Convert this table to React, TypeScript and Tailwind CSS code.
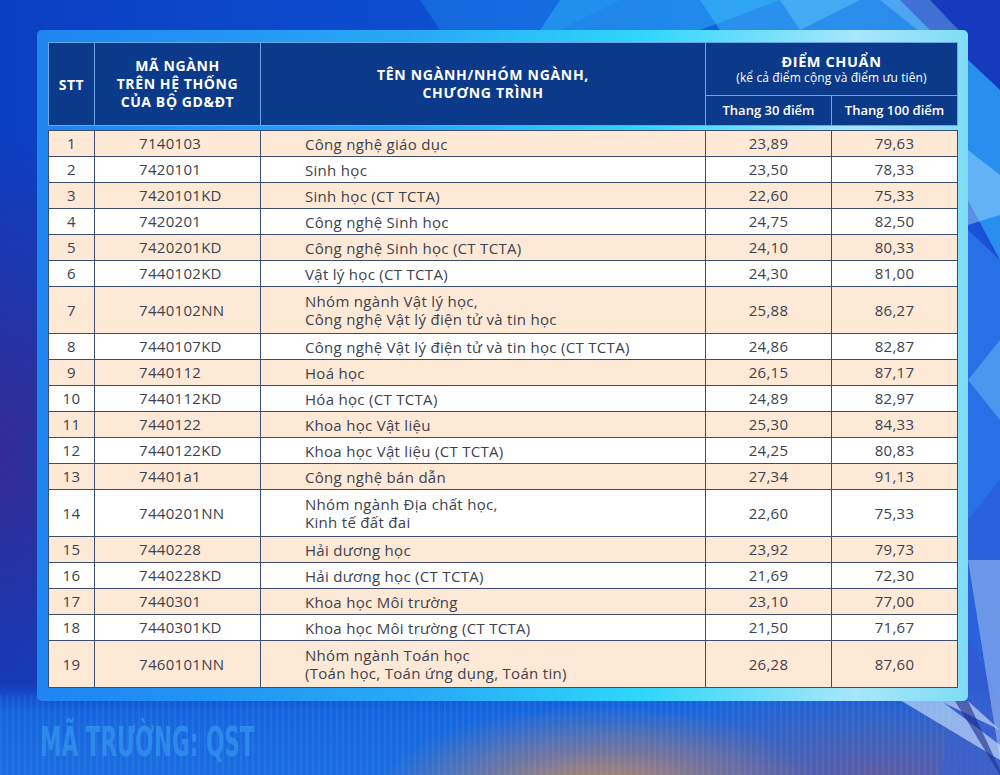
import React from 'react'

type Row = {
  stt: number
  code: string
  name: string[]
  s30: string
  s100: string
}

const rows: Row[] = [
  { stt: 1, code: '7140103', name: ['Công nghệ giáo dục'], s30: '23,89', s100: '79,63' },
  { stt: 2, code: '7420101', name: ['Sinh học'], s30: '23,50', s100: '78,33' },
  { stt: 3, code: '7420101KD', name: ['Sinh học (CT TCTA)'], s30: '22,60', s100: '75,33' },
  { stt: 4, code: '7420201', name: ['Công nghệ Sinh học'], s30: '24,75', s100: '82,50' },
  { stt: 5, code: '7420201KD', name: ['Công nghệ Sinh học (CT TCTA)'], s30: '24,10', s100: '80,33' },
  { stt: 6, code: '7440102KD', name: ['Vật lý học (CT TCTA)'], s30: '24,30', s100: '81,00' },
  { stt: 7, code: '7440102NN', name: ['Nhóm ngành Vật lý học,', 'Công nghệ Vật lý điện tử và tin học'], s30: '25,88', s100: '86,27' },
  { stt: 8, code: '7440107KD', name: ['Công nghệ Vật lý điện tử và tin học (CT TCTA)'], s30: '24,86', s100: '82,87' },
  { stt: 9, code: '7440112', name: ['Hoá học'], s30: '26,15', s100: '87,17' },
  { stt: 10, code: '7440112KD', name: ['Hóa học (CT TCTA)'], s30: '24,89', s100: '82,97' },
  { stt: 11, code: '7440122', name: ['Khoa học Vật liệu'], s30: '25,30', s100: '84,33' },
  { stt: 12, code: '7440122KD', name: ['Khoa học Vật liệu (CT TCTA)'], s30: '24,25', s100: '80,83' },
  { stt: 13, code: '74401a1', name: ['Công nghệ bán dẫn'], s30: '27,34', s100: '91,13' },
  { stt: 14, code: '7440201NN', name: ['Nhóm ngành Địa chất học,', 'Kinh tế đất đai'], s30: '22,60', s100: '75,33' },
  { stt: 15, code: '7440228', name: ['Hải dương học'], s30: '23,92', s100: '79,73' },
  { stt: 16, code: '7440228KD', name: ['Hải dương học (CT TCTA)'], s30: '21,69', s100: '72,30' },
  { stt: 17, code: '7440301', name: ['Khoa học Môi trường'], s30: '23,10', s100: '77,00' },
  { stt: 18, code: '7440301KD', name: ['Khoa học Môi trường (CT TCTA)'], s30: '21,50', s100: '71,67' },
  { stt: 19, code: '7460101NN', name: ['Nhóm ngành Toán học', '(Toán học, Toán ứng dụng, Toán tin)'], s30: '26,28', s100: '87,60' },
]

function Cols() {
  return (
    <colgroup>
      <col className="w-[46px]" />
      <col className="w-[166px]" />
      <col className="w-[445px]" />
      <col className="w-[126px]" />
      <col className="w-[126px]" />
    </colgroup>
  )
}

function Backdrop() {
  return (
    <svg className="absolute inset-0" width="1000" height="775" viewBox="0 0 1000 775">
      {/* top facets */}
      <polygon points="420,0 620,0 560,30 440,30" fill="#1a7fe8" opacity="0.55" />
      <polygon points="560,0 780,0 700,30 540,30" fill="#2aa6f4" opacity="0.6" />
      <polygon points="700,0 900,0 930,30 720,30" fill="#3bbaf8" opacity="0.55" />
      <polygon points="780,0 860,0 800,30" fill="#66ccff" opacity="0.45" />
      <polygon points="900,0 1000,0 1000,90 968,60 930,30" fill="#1636b8" opacity="0.85" />
      <polygon points="880,0 930,0 968,40 968,70" fill="#8fd8ff" opacity="0.35" />
      {/* right crystal */}
      <polygon points="968,60 1000,90 1000,260 968,200" fill="#2c9af2" opacity="0.85" />
      <polygon points="968,150 1000,175 1000,215 968,225" fill="#a9defd" opacity="0.45" />
      <polygon points="968,230 1000,260 1000,480 968,520" fill="#2a78e8" opacity="0.8" />
      <polygon points="968,380 1000,340 1000,420" fill="#7fd0ff" opacity="0.4" />
      <polygon points="968,520 1000,480 1000,700 968,640" fill="#2f66dc" opacity="0.8" />
      <polygon points="968,640 1000,700 1000,775 940,775" fill="#3b5fd0" opacity="0.7" />
      <polygon points="900,700 940,700 1000,745 1000,760" fill="#d6ecff" opacity="0.6" />
      <polygon points="940,701 968,701 1000,730" fill="#ffffff" opacity="0.5" />
      <polygon points="955,701 968,701 1000,770 1000,775" fill="#1d2c8a" opacity="0.6" />
      <polygon points="968,560 1000,560 1000,760" fill="#cfe9ff" opacity="0.4" />
    </svg>
  )
}

export default function App() {
  return (
    <div className="relative w-[1000px] h-[775px] overflow-hidden bg-[#0c45c6] font-['Open_Sans','Noto_Sans',sans-serif]">
      {/* background layers */}
      <div className="absolute inset-0 bg-[linear-gradient(90deg,#0b3fc2_0%,#0d4ccf_40%,#1660e0_75%,#1a4fd6_100%)]" />
      <div className="absolute inset-0 bg-[radial-gradient(ellipse_180px_320px_at_0%_58%,rgba(60,40,140,0.85),transparent)]" />
      <div className="absolute inset-0 bg-[linear-gradient(180deg,transparent_88%,rgba(22,104,224,0.95)_92%,rgba(26,110,224,1)_100%)]" />
      <div className="absolute inset-0 bg-[radial-gradient(ellipse_320px_90px_at_88%_100%,rgba(95,90,160,0.95),transparent)]" />
      <div className="absolute inset-0 bg-[radial-gradient(ellipse_230px_100px_at_60%_104%,rgba(215,148,80,1),rgba(170,125,120,0.6)_55%,transparent)]" />
      <div className="absolute inset-x-0 bottom-0 h-[80px] bg-[repeating-linear-gradient(90deg,rgba(255,255,255,0.05)_0px,rgba(255,255,255,0.05)_2px,transparent_2px,transparent_6px)]" />
      <Backdrop />

      <div className="relative pt-[30px] pl-[37px]">
        {/* panel */}
        <div className="w-[931px] h-[671px] rounded-[5px] bg-[linear-gradient(90deg,#1e84f2_0%,#27a8f6_40%,#2fd6fa_65%,#a8e6fb_88%,#7fdcf6_100%)] pt-[12px] pl-[11px]">
          <table className="table-fixed w-[909px] border-collapse bg-[#0c3a8a] text-white">
            <Cols />
            <thead>
              <tr className="h-[53px]">
                <th rowSpan={2} className="border border-[#6aa6e6] text-[14px] tracking-[0.5px] font-bold">STT</th>
                <th rowSpan={2} className="border border-[#6aa6e6] text-[14px] tracking-[0.6px] font-bold leading-[18px]">
                  MÃ NGÀNH<br />TRÊN HỆ THỐNG<br />CỦA BỘ GD&amp;ĐT
                </th>
                <th rowSpan={2} className="border border-[#6aa6e6] text-[14px] tracking-[0.7px] font-bold leading-[18px]">
                  TÊN NGÀNH/NHÓM NGÀNH,<br />CHƯƠNG TRÌNH
                </th>
                <th colSpan={2} className="border border-[#6aa6e6] align-middle">
                  <div className="text-[14.5px] tracking-[0.6px] font-bold leading-[17px]">ĐIỂM CHUẨN</div>
                  <div className="text-[12px] tracking-[0.1px] font-normal leading-[15px]">(kể cả điểm cộng và điểm ưu tiên)</div>
                </th>
              </tr>
              <tr className="h-[30px]">
                <th className="border border-[#6aa6e6] text-[13px] font-semibold">Thang 30 điểm</th>
                <th className="border border-[#6aa6e6] text-[13px] font-semibold">Thang 100 điểm</th>
              </tr>
            </thead>
          </table>

          <table className="table-fixed w-[909px] border-collapse mt-[4px] text-[15px] tracking-[0.3px] text-[#3d424e]">
            <Cols />
            <tbody>
              {rows.map((r) => (
                <tr
                  key={r.stt}
                  className={`${r.name.length > 1 ? 'h-[47px]' : 'h-[26px]'} ${r.stt % 2 === 1 ? 'bg-[#fde9d5]' : 'bg-white'}`}
                >
                  <td className="border-[1.5px] border-[#3c4d70] text-center">{r.stt}</td>
                  <td className="border-[1.5px] border-[#3c4d70] pl-[44px]">{r.code}</td>
                  <td className="border-[1.5px] border-[#3c4d70] pl-[44px] leading-[18px]">
                    {r.name.map((n) => (
                      <div key={n}>{n}</div>
                    ))}
                  </td>
                  <td className="border-[1.5px] border-[#3c4d70] text-center">{r.s30}</td>
                  <td className="border-[1.5px] border-[#3c4d70] text-center">{r.s100}</td>
                </tr>
              ))}
            </tbody>
          </table>
        </div>

        {/* school code */}
        <div className="mt-[21px] ml-[3px] h-[40px]">
          <span className="inline-block origin-left scale-x-[0.6] font-['DejaVu_Sans_Condensed','DejaVu_Sans',sans-serif] font-bold text-[40px] leading-[40px] text-[#3290ec] opacity-85 whitespace-nowrap">
            MÃ TRƯỜNG: QST
          </span>
        </div>
      </div>
    </div>
  )
}
